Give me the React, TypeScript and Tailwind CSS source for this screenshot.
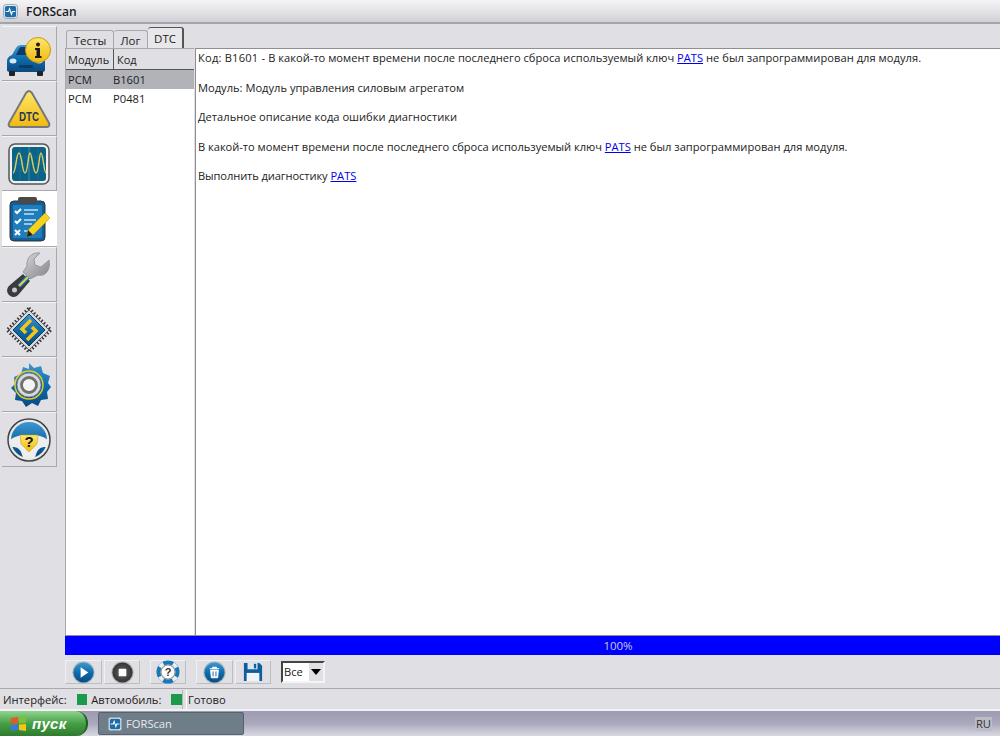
import React from 'react';

const font = "font-['Open_Sans','Noto_Sans',sans-serif]";

const AppGlyph = ({ size = 15 }: { size?: number }) => (
  <svg width={size} height={size} viewBox="0 0 16 16">
    <rect x="0.5" y="0.5" width="15" height="15" rx="3" fill="#e8eef4" stroke="#8fa3b5" />
    <rect x="2" y="2" width="12" height="12" rx="2" fill="#1d6ca8" />
    <path d="M3 8h3l1-3 2 6 1-3h3" fill="none" stroke="#fff" strokeWidth="1.2" />
  </svg>
);

// shared gradients for the glossy blue / yellow icons
const Defs = () => (
  <svg width="0" height="0" className="absolute">
    <defs>
      <linearGradient id="blue" x1="0" y1="0" x2="0" y2="1">
        <stop offset="0" stopColor="#3f97cf" />
        <stop offset="0.55" stopColor="#0c68a8" />
        <stop offset="1" stopColor="#0a4a80" />
      </linearGradient>
      <linearGradient id="yellow" x1="0" y1="0" x2="0" y2="1">
        <stop offset="0" stopColor="#fde76a" />
        <stop offset="1" stopColor="#f2b90f" />
      </linearGradient>
      <linearGradient id="steel" x1="0" y1="0" x2="1" y2="1">
        <stop offset="0" stopColor="#d8d9db" />
        <stop offset="1" stopColor="#808285" />
      </linearGradient>
      <radialGradient id="dark">
        <stop offset="0" stopColor="#666" />
        <stop offset="1" stopColor="#333" />
      </radialGradient>
    </defs>
  </svg>
);

const CarIcon = () => (
  <svg width="46" height="40" viewBox="0 0 46 40" className="mt-[6px] ml-[-1px]">
    <path d="M1 25c0-4 2-6 5-7l4-7c1-2 3-3 5-3h11c3 0 4 1 5 3l3 7c4 1 5 3 5 7v8c0 1-1 2-3 2H4c-2 0-3-1-3-2z" fill="url(#blue)" />
    <path d="M10 18l3-6c.5-1 1-2 2-2h11c1 0 2 1 2 2l3 6z" fill="#0a3d66" />
    <rect x="3" y="34" width="6" height="5" rx="1" fill="#222" />
    <rect x="31" y="34" width="6" height="5" rx="1" fill="#222" />
    <ellipse cx="7" cy="24" rx="3.5" ry="2.500" fill="#d9e8f2" />
    <ellipse cx="33" cy="24" rx="3.5" ry="2.500" fill="#d9e8f2" />
    <rect x="13" y="28" width="14" height="3" rx="1" fill="#0a3d66" />
    <circle cx="32" cy="13" r="12.500" fill="url(#yellow)" stroke="#c99a0c" />
    <circle cx="32" cy="7.500" r="2" fill="#1c1c1c" />
    <path d="M29 11h5v8h1.500v2h-6.500v-2h1.500v-6h-1.500z" fill="#1c1c1c" />
  </svg>
);

const DtcIcon = () => (
  <svg width="44" height="40" viewBox="0 0 44 40">
    <path d="M22 2c1 0 2 1 3 2l17 30c1 2 0 4-2 4H4c-2 0-3-2-2-4L19 4c1-1 2-2 3-2z" fill="url(#yellow)" stroke="#77787a" strokeWidth="2" />
    <text x="22" y="32" textAnchor="middle" fontSize="12" fontWeight="700" fill="#1f3a55" fontFamily="Liberation Sans" textLength="20" lengthAdjust="spacingAndGlyphs">DTC</text>
  </svg>
);

const ScopeIcon = () => (
  <svg width="42" height="42" viewBox="0 0 42 42">
    <rect x="1" y="1" width="40" height="40" rx="6" fill="#eef0f2" stroke="#555" strokeWidth="1.500" />
    <rect x="4" y="4" width="34" height="34" rx="3" fill="#0b6487" />
    <path d="M21 4v34" stroke="#3c8ca8" strokeWidth="1" />
    <path d="M4 14h34M4 21h34M4 28h34M12 4v34M30 4v34" stroke="#217a9c" strokeWidth="0.500" />
    <path d="M5 30c3 0 3-20 6-20s3 20 6 20 3-20 5-20 3 20 6 20 3-20 5-20 3 20 5 20" fill="none" stroke="#d9cb5f" strokeWidth="1.500" />
  </svg>
);

const ClipboardIcon = () => (
  <svg width="42" height="46" viewBox="0 0 42 46">
    <rect x="1" y="5" width="35" height="40" rx="4" fill="#0f5f9a" stroke="#333" />
    <rect x="9" y="1" width="19" height="7" rx="2" fill="#4a4a4a" />
    <rect x="4" y="9" width="29" height="33" rx="1" fill="#1f7dbd" />
    <path d="M6 15l2 2 4-4M6 25l2 2 4-4M6 34l5 5M11 34l-5 5" fill="none" stroke="#fff" strokeWidth="2" />
    <path d="M15 14h14M15 18h10M15 24h12M15 28h8M15 35h5" stroke="#bfe0f5" strokeWidth="1.500" />
    <path d="M36 17l5 5-17 17-6 2 1-7z" fill="#f6d21d" stroke="#b08b0a" strokeWidth="0.500" />
    <path d="M19 34l5 5-6 2z" fill="#222" />
  </svg>
);

const WrenchIcon = () => (
  <svg width="44" height="46" viewBox="0 0 44 46">
    <path d="M42 8l-8 7-6-2-1-6 6-6C25 0 19 6 20 14L16 20l7 7 8-4c8 2 13-6 11-15z" fill="url(#steel)" stroke="#9a9b9e" />
    <path d="M3 33a6.500 6.500 0 1 0 9 9l11-13-7-7z" fill="#3a3b3d" />
    <circle cx="7.500" cy="38" r="2.500" fill="#c9cacc" />
    <path d="M12 34l9-9" stroke="#1a78c2" strokeWidth="4.500" />
    <path d="M12 34l9-9" stroke="#e9d640" strokeWidth="1.800" />
  </svg>
);

const ChipIcon = () => (
  <svg width="46" height="46" viewBox="0 0 46 46">
    <path d="M23 1l22 22-22 22L1 23z" fill="none" stroke="#333" strokeWidth="3" strokeDasharray="1.500 2" />
    <path d="M23 3l20 20-20 20L3 23z" fill="#d7d8da" stroke="#666" />
    <path d="M23 7l16 16-16 16L7 23z" fill="url(#blue)" stroke="#0a3d66" />
    <path d="M25 13l-9 9 4 4M21 33l9-9-4-4" fill="none" stroke="#f5c518" strokeWidth="3.500" />
  </svg>
);

const GearIcon = () => (
  <svg width="46" height="46" viewBox="0 0 46 46">
    <path d="M23 1l5 5 7-2 2 7 7 3-2 7 3 4-4 5 1 7-7 1-3 6-6-3-6 4-4-6-7-1 1-7-5-5 4-4-1-7 7-3 2-7 6 2z" fill="url(#blue)" />
    <circle cx="23" cy="23" r="14" fill="none" stroke="#e3c72b" strokeWidth="1.500" />
    <circle cx="23" cy="23" r="12" fill="#d9dadc" stroke="#777" strokeWidth="0.800" />
    <circle cx="23" cy="23" r="7.500" fill="#f4f4f4" stroke="#707070" strokeWidth="2.800" />
  </svg>
);

const WheelIcon = () => (
  <svg width="44" height="44" viewBox="0 0 44 44">
    <circle cx="22" cy="22" r="21" fill="#e8e8e8" stroke="#444" strokeWidth="1.500" />
    <circle cx="22" cy="22" r="18" fill="url(#blue)" />
    <path d="M3 22c5-4 10-5 19-5s14 1 19 5c0 3-1 5-2 7-6 0-9 2-11 11h-12c-2-9-5-11-11-11-1-2-2-4-2-7z" fill="#eeeeee" />
    <path d="M13 17h18l-1 9-8 8-8-8z" fill="url(#yellow)" stroke="#b89c10" strokeWidth="0.500" />
    <text x="22" y="29" textAnchor="middle" fontSize="15" fontWeight="700" fill="#111" fontFamily="Liberation Sans">?</text>
  </svg>
);

const sideItems = [
  { key: 'info', h: 'h-[55px]', icon: <CarIcon /> },
  { key: 'dtc', h: 'h-[55px]', icon: <DtcIcon /> },
  { key: 'scope', h: 'h-[55px]', icon: <ScopeIcon /> },
  { key: 'tests', h: 'h-[56px]', icon: <ClipboardIcon />, active: true },
  { key: 'tools', h: 'h-[55px]', icon: <WrenchIcon /> },
  { key: 'chip', h: 'h-[55px]', icon: <ChipIcon /> },
  { key: 'gear', h: 'h-[55px]', icon: <GearIcon /> },
  { key: 'wheel', h: 'h-[55px]', icon: <WheelIcon /> },
];

const PlayIcon = () => (
  <svg width="23" height="23" viewBox="0 0 24 24">
    <circle cx="12" cy="12" r="11.500" fill="#9fb4c4" />
    <circle cx="12" cy="12" r="10.500" fill="url(#blue)" />
    <path d="M9 6.500l8 5.500-8 5.500z" fill="#fff" />
  </svg>
);
const StopIcon = () => (
  <svg width="23" height="23" viewBox="0 0 24 24">
    <circle cx="12" cy="12" r="11.500" fill="#aaa" />
    <circle cx="12" cy="12" r="10.500" fill="url(#dark)" />
    <rect x="8" y="8" width="8" height="8" rx="1" fill="#fff" />
  </svg>
);
const HelpIcon = () => (
  <svg width="24" height="24" viewBox="0 0 24 24">
    <circle cx="12" cy="12" r="9.500" fill="none" stroke="#1a78b8" strokeWidth="4" />
    <circle cx="12" cy="12" r="9.500" fill="none" stroke="#e8eef2" strokeWidth="4" strokeDasharray="5 9.920" strokeDashoffset="10" />
    <circle cx="12" cy="12" r="7" fill="#fff" stroke="#888" />
    <text x="12" y="16" textAnchor="middle" fontSize="11" fontWeight="700" fill="#333" fontFamily="Liberation Sans">?</text>
  </svg>
);
const TrashIcon = () => (
  <svg width="23" height="23" viewBox="0 0 24 24">
    <circle cx="12" cy="12" r="11.500" fill="#9fb4c4" />
    <circle cx="12" cy="12" r="10.500" fill="url(#blue)" />
    <path d="M7 8h10M10 8V6.500h4V8M8 9.500h8l-.7 8h-6.600z" fill="#fff" stroke="#fff" />
    <path d="M10.500 11v5M13.500 11v5" stroke="#0d69a8" />
  </svg>
);
const SaveIcon = () => (
  <svg width="20" height="20" viewBox="0 0 22 22">
    <path d="M1 1h17l3 3v17H1z" fill="#0d5f9c" />
    <rect x="5" y="1" width="11" height="7" fill="#dbe6ee" />
    <rect x="12" y="2" width="2.500" height="5" fill="#0d5f9c" />
    <rect x="4" y="12" width="14" height="9" fill="#f2f5f7" />
  </svg>
);

const ToolBtn = ({ w, children }: { w: string; children: React.ReactNode }) => (
  <button className={`${w} h-[24px] flex items-center justify-center bg-[#e0dfe3] border border-t-[#f0f0f2] border-l-[#f0f0f2] border-b-[#bdbcc1] border-r-[#bdbcc1]`}>
    {children}
  </button>
);

const Link = () => <span className="text-[#0000ee] underline">PATS</span>;

export default function App() {
  return (
    <div className={`${font} relative w-[1000px] h-[736px] flex flex-col overflow-hidden bg-[#e0dfe3] text-[11.2px] leading-[14px] text-[#1c1c1c]`}>
      <Defs />
      {/* Title bar */}
      <div className="h-[24px] shrink-0 flex items-center pl-[3px] pt-[1px] gap-[8px] border-b-2 border-[#a4a4ac] bg-gradient-to-b from-[#f4f4f6] via-[#e4e4e8] to-[#d0d0d6]">
        <AppGlyph />
        <span className="text-[12px] font-semibold">FORScan</span>
      </div>

      <div className="flex flex-1 min-h-0">
        {/* Side buttons */}
        <div className="w-[65px] shrink-0 pt-[2px] pl-[2px]">
          <div className="w-[55px] flex flex-col">
            {sideItems.map(item => (
              <div
                key={item.key}
                className={`${item.h} flex items-center justify-center border-b border-[#a9a8ac] ${item.active ? 'bg-white' : 'bg-[#e0dfe3] border-r border-t border-t-[#f4f4f6]'}`}
              >
                {item.icon}
              </div>
            ))}
          </div>
        </div>

        <div className="flex-1 min-w-0 flex flex-col">
          {/* Tabs */}
          <div className="h-[24px] shrink-0 flex items-end pl-[1px] text-[11.5px]">
            <div className="h-[18px] pt-[2px] w-[48px] flex items-center justify-center border border-b-0 border-[#a9a8ac] rounded-t-[3px]">Тесты</div>
            <div className="h-[18px] pt-[2px] w-[34px] flex items-center justify-center border border-b-0 border-l-0 border-[#a9a8ac] rounded-t-[3px]">Лог</div>
            <div className="h-[21px] pt-[2px] w-[36px] flex items-center justify-center border-r-2 border-t border-[#555] rounded-t-[3px] bg-[#e8e8ea]">DTC</div>
          </div>

          {/* Panels */}
          <div className="flex flex-1 min-h-0">
            <div className="w-[129px] shrink-0 bg-white border-t border-l border-[#a9a8ac]">
              <div className="flex h-[21px] bg-[#e0dfe3] border-b border-[#555] text-[11px]">
                <div className="w-[48px] flex items-center pl-[2px] pt-[2px] border-r border-[#555]">Модуль</div>
                <div className="flex-1 flex items-center pl-[3px] pt-[2px]">Код</div>
              </div>
              <div className="flex h-[19px] pt-[1px] items-center bg-[#b2b2b9]">
                <span className="w-[47px] pl-[2px]">PCM</span>
                <span>B1601</span>
              </div>
              <div className="flex h-[19px] pt-[1px] items-center">
                <span className="w-[47px] pl-[2px]">PCM</span>
                <span>P0481</span>
              </div>
            </div>
            <div className="flex-1 ml-[1px] bg-white border-t border-l border-[#8f8f93] pl-[2px] pt-[2px] flex flex-col gap-[15.500px] text-[11.13px]">
              <p><span className="tracking-[0.2px]">Код: B1601 - </span>В какой-то момент времени после последнего сброса используемый ключ <Link /> <span className="tracking-[0.04px]">не был запрограммирован для модуля.</span></p>
              <p>Модуль: Модуль управления силовым агрегатом</p>
              <p>Детальное описание кода ошибки диагностики</p>
              <p><span className="tracking-[-0.03px]">В какой-то момент времени после последнего сброса используемый ключ</span> <Link /> не был запрограммирован для модуля.</p>
              <p><span className="tracking-[-0.1px]">Выполнить диагностику</span> <Link /></p>
            </div>
          </div>

          {/* Progress */}
          <div className="h-[20px] shrink-0 bg-[#0000ff] border-t border-[#8f8f93] pl-[171px] flex items-center justify-center text-[#c9c9d6] text-[11.5px]">100%</div>

          {/* Toolbar */}
          <div className="h-[33px] shrink-0 flex items-center pt-[1px]">
            <ToolBtn w="w-[37px]"><PlayIcon /></ToolBtn>
            <ToolBtn w="w-[36px] ml-[2px]"><StopIcon /></ToolBtn>
            <ToolBtn w="w-[36px] ml-[10px]"><HelpIcon /></ToolBtn>
            <ToolBtn w="w-[37px] ml-[10px]"><TrashIcon /></ToolBtn>
            <ToolBtn w="w-[36px] ml-[2px]"><SaveIcon /></ToolBtn>
            <div className="ml-[10px] w-[44px] h-[22px] bg-white border-2 border-[#444] border-r-[#f4f4f6] border-b-[#f4f4f6] flex items-center justify-between pl-[1px]">
              <span>Все</span>
              <span className="w-[14px] h-full bg-[#e0dfe3] flex items-center justify-center">
                <span className="w-0 h-0 border-x-[5px] border-x-transparent border-t-[6px] border-t-black" />
              </span>
            </div>
          </div>
        </div>
      </div>

      {/* Status bar */}
      <div className="h-[21px] shrink-0 flex border-t border-[#a9a8ac] pt-[1px] pl-[3px]">
        <div className="w-[180px] flex items-center border-r border-[#b5b4b8]">
          <span>Интерфейс:</span>
          <span className="w-[11px] h-[11px] bg-[#1a9a4a] ml-[10px]" />
          <span className="ml-[4px]">Автомобиль:</span>
          <span className="w-[11px] h-[11px] bg-[#1a9a4a] ml-[10px]" />
        </div>
        <div className="pl-[1px] flex items-center border-l border-white ml-[3px]">Готово</div>
      </div>

      {/* XP taskbar */}
      <div className="h-[27px] shrink-0 flex items-center bg-gradient-to-b from-[#9c9bb2] via-[#a9a8bc] to-[#d9d9e2] border-t-2 border-[#f2f2f5]">
        <div className="w-[88px] h-full flex items-center gap-[5px] pl-[10px] rounded-r-[12px] bg-gradient-to-b from-[#8fd48f] via-[#45a045] to-[#2f7a2f] border-r-2 border-[#1f5f1f]">
          <svg width="17" height="16" viewBox="0 0 17 16">
            <path d="M1 2l7-1v6l-7 1z" fill="#e8562a" />
            <path d="M9 1l7-1v7l-7 .500z" fill="#7cc03a" />
            <path d="M1 9l7-1v6l-7 1z" fill="#3a79d8" />
            <path d="M9 8.500l7-.500v7l-7-1z" fill="#f5c518" />
          </svg>
          <span className="text-white font-bold italic text-[15px] tracking-[0.3px] font-['Liberation_Sans',sans-serif]">пуск</span>
        </div>
        <div className="ml-[10px] w-[146px] h-[23px] flex items-center gap-[4px] pl-[9px] bg-[#6f7d88] border border-[#56626c] rounded-[2px] text-[#e8e8ee]">
          <AppGlyph size={14} />
          <span>FORScan</span>
        </div>
        <div className="ml-auto mr-[8px] px-[1px] bg-[#bcbcc8] text-[#333]">RU</div>
      </div>
    </div>
  );
}
